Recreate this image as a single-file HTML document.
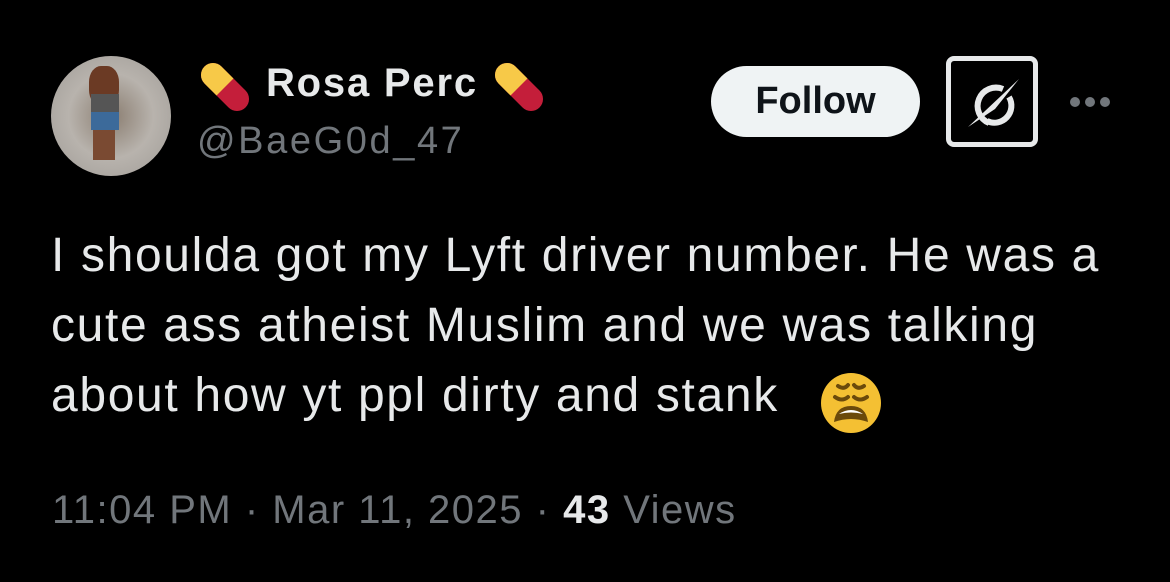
<!DOCTYPE html>
<html><head><style>
body{margin:0;background:#000;width:1170px;height:582px;overflow:hidden;font-family:"Liberation Sans",sans-serif;position:relative}
.a{position:absolute}
.txt{color:#e7e9ea;font-size:48px;line-height:70px;left:51px;top:221px;letter-spacing:1.65px;white-space:nowrap}
</style></head><body>
<div class="a" style="left:51px;top:56px;width:120px;height:120px;border-radius:50%;background:radial-gradient(circle at 50% 50%,#8a7d70 0%,#b8b3ad 50%,#9e9a95 100%);overflow:hidden">
<div class="a" style="left:38px;top:10px;width:30px;height:40px;background:#6b3a24;border-radius:40%"></div>
<div class="a" style="left:40px;top:38px;width:28px;height:18px;background:#555"></div>
<div class="a" style="left:40px;top:56px;width:28px;height:18px;background:#3c6a9a"></div>
<div class="a" style="left:42px;top:74px;width:22px;height:30px;background:#7a4a32"></div>
</div>
<svg class="a" style="left:192px;top:54px" width="66" height="66" viewBox="0 0 66 66"><g transform="rotate(-45 33 33)"><rect x="21" y="4" width="24" height="58" rx="12" fill="#c41e3a"/><path d="M21 33 V16 A12 12 0 0 1 45 16 V33Z" fill="#f7c948"/></g></svg>
<div class="a" style="left:266px;top:61px;color:#e7e9ea;font-weight:bold;font-size:40px;letter-spacing:1.8px">Rosa Perc</div>
<svg class="a" style="left:486px;top:54px" width="66" height="66" viewBox="0 0 66 66"><g transform="rotate(-45 33 33)"><rect x="21" y="4" width="24" height="58" rx="12" fill="#c41e3a"/><path d="M21 33 V16 A12 12 0 0 1 45 16 V33Z" fill="#f7c948"/></g></svg>
<div class="a" style="left:197px;top:120px;color:#71767b;font-size:38px;letter-spacing:2.6px">@BaeG0d_47</div>
<div class="a" style="left:711px;top:66px;width:209px;height:71px;border-radius:36px;background:#eff3f4;color:#0f1419;font-weight:bold;font-size:38px;line-height:71px;text-align:center">Follow</div>
<div class="a" style="left:946px;top:56px;width:82px;height:81px;border:5px solid #e7e9ea;border-radius:8px">
<svg width="82" height="81" viewBox="0 0 82 81"><path d="M52 28 A17 17 0 1 0 38 62" fill="none" stroke="#e7e9ea" stroke-width="6"/><path d="M58 36 A17 17 0 0 1 36 60" fill="none" stroke="#e7e9ea" stroke-width="6"/><path d="M17 66 L68 18 L44 48Z" fill="#e7e9ea"/></svg></div>
<div class="a" style="left:1068px;top:95px"><svg width="44" height="14"><circle cx="7" cy="7" r="5" fill="#71767b"/><circle cx="22" cy="7" r="5" fill="#71767b"/><circle cx="37" cy="7" r="5" fill="#71767b"/></svg></div>
<div class="a txt">I shoulda got my Lyft driver number. He was a<br>cute ass atheist Muslim and we was talking<br>about how yt ppl dirty and stank</div>
<svg class="a" style="left:820px;top:372px" width="62" height="62" viewBox="0 0 62 62"><circle cx="31" cy="31" r="30" fill="#f4c033"/><path d="M18 14 q6 4 10 -1 M34 13 q4 5 10 1" stroke="#6b4a0b" stroke-width="4" fill="none" stroke-linecap="round"/><path d="M15 25 q7 5 13 0 M34 25 q6 5 13 0" stroke="#6b4a0b" stroke-width="4" fill="none" stroke-linecap="round"/><path d="M14 50 Q16 34 31 34 Q46 34 48 50 Q31 44 14 50Z" fill="#6b4a0b"/><path d="M19 42 Q31 34 43 42 Q31 39 19 42Z" fill="#fff"/></svg>
<div class="a" style="left:52px;top:488px;color:#71767b;font-size:40px;letter-spacing:1.5px;white-space:nowrap">11:04 PM · Mar 11, 2025 · <b style="color:#e7e9ea">43</b> Views</div>
</body></html>
